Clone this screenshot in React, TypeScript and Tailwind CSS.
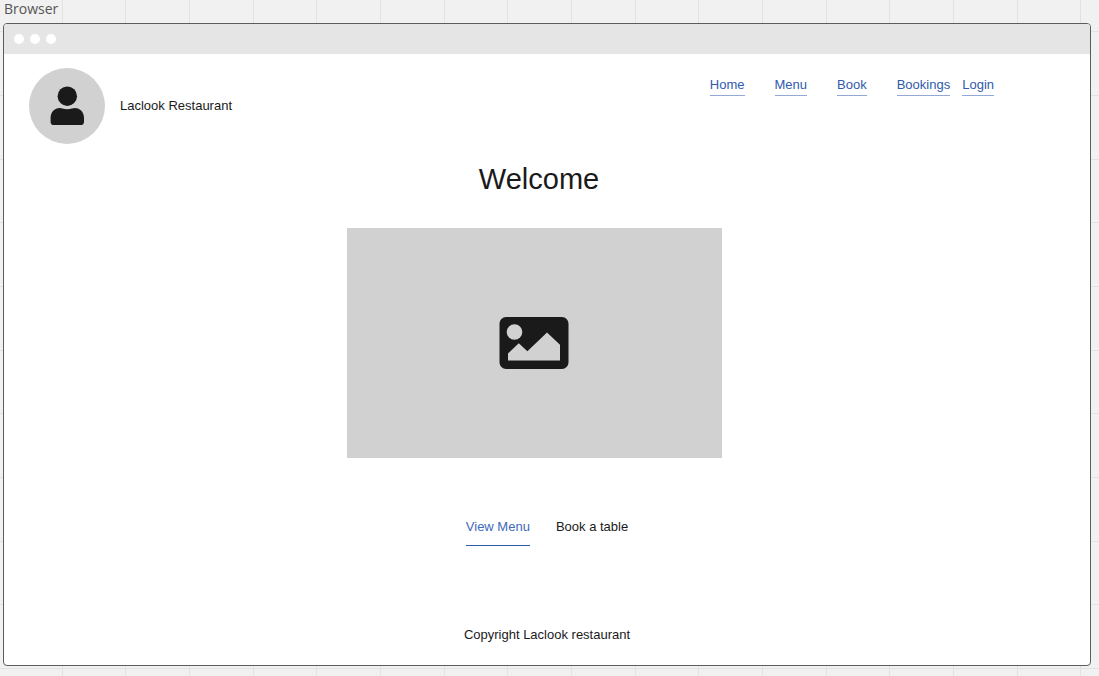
const columns = [62, 125, 189, 253, 316, 380, 444, 507, 571, 635, 698, 762, 826, 889, 953, 1017, 1080];
const rows = [31, 95, 159, 222, 286, 350, 413, 477, 541, 604, 668];

function CanvasGrid() {
  return (
    <svg aria-hidden="true" className="absolute inset-0 -z-10 h-full w-full" shapeRendering="crispEdges">
      {columns.map((x) => (
        <rect key={x} x={x} y="0" width="1" height="100%" fill="#e2e2e2" />
      ))}
      {rows.map((y) => (
        <rect key={y} x="0" y={y} width="100%" height="1" fill="#e2e2e2" />
      ))}
    </svg>
  );
}

function UserIcon() {
  return (
    <svg aria-hidden="true" viewBox="0 0 34 40" className="h-10 w-[34px]" fill="#1a1a1a">
      <circle cx="17.3" cy="10.2" r="9.7" />
      <path d="M9.8 21.9C10.9 21.9 11.5 22.3 12.5 22.6C15.5 23.5 19.1 23.5 22.1 22.6C23.1 22.3 23.7 21.9 24.8 21.9C30.1 21.9 34 26.3 34 31.7V35.9C34 37.8 32.6 39 30.9 39H3.7C2 39 0.6 37.8 0.6 35.9V31.7C0.6 26.3 4.5 21.9 9.8 21.9Z" />
    </svg>
  );
}

function ImageIcon() {
  return (
    <svg aria-hidden="true" viewBox="0 0 70 53" className="h-[53px] w-[70px]">
      <rect x="0.5" y="0" width="69" height="52" rx="6.5" fill="#1a1a1a" />
      <circle cx="15.5" cy="15" r="7.8" fill="#d1d1d1" />
      <path d="M9 36.4L19.8 26.2L28.4 34.2L48 15.5L61 27.7V43.4H9Z" fill="#d1d1d1" />
    </svg>
  );
}

function NavLink({ label }: { label: string }) {
  return (
    <a href="#" className="border-b border-[#93a8d4] pb-0.5 text-[13px] leading-4 text-[#305bab]">
      {label}
    </a>
  );
}

export default function App() {
  return (
    <div className="relative isolate flex min-h-screen flex-col bg-[#f1f1f1] pr-2 pb-2.5 pl-[3px] font-['Liberation_Sans',Arial,sans-serif] text-[#1a1a1a]">
      <CanvasGrid />
      <p className="h-[23px] pl-px font-['Open_Sans',sans-serif] text-sm leading-[18px] text-[#555555]">Browser</p>
      <div className="flex grow flex-col overflow-hidden rounded-[4px] border border-[#5c5c5c] bg-white">
        <div className="flex h-[30px] items-center gap-1.5 bg-[#e5e5e5] pl-2.5">
          <span className="size-2.5 rounded-full bg-white" />
          <span className="size-2.5 rounded-full bg-white" />
          <span className="size-2.5 rounded-full bg-white" />
        </div>
        <header className="flex items-start justify-between pt-3.5 pr-24 pl-[25px]">
          <div className="flex items-center gap-[15px]">
            <div className="flex size-[76px] items-center justify-center rounded-full bg-[#d1d1d1]">
              <UserIcon />
            </div>
            <span className="text-[13px] leading-4">Laclook Restaurant</span>
          </div>
          <nav className="flex gap-[30px] pt-[9px]">
            <NavLink label="Home" />
            <NavLink label="Menu" />
            <NavLink label="Book" />
            <div className="flex gap-3">
              <NavLink label="Bookings" />
              <NavLink label="Login" />
            </div>
          </nav>
        </header>
        <main className="flex flex-col items-center">
          <h1 className="mt-[17px] pr-4 text-[29px] leading-9">Welcome</h1>
          <div className="pt-[31px] pr-[26px]">
            <div className="flex h-[230px] w-[375px] items-center justify-center bg-[#d1d1d1]">
              <ImageIcon />
            </div>
          </div>
          <div className="mt-[61px] flex items-start gap-[26px] text-[13px] leading-4">
            <a href="#" className="border-b border-[#305bab] pb-2.5 text-[#416abb]">View Menu</a>
            <a href="#">Book a table</a>
          </div>
        </main>
        <footer className="mt-auto pb-[22px] text-center text-[13px] leading-4">Copyright Laclook restaurant</footer>
      </div>
    </div>
  );
}
